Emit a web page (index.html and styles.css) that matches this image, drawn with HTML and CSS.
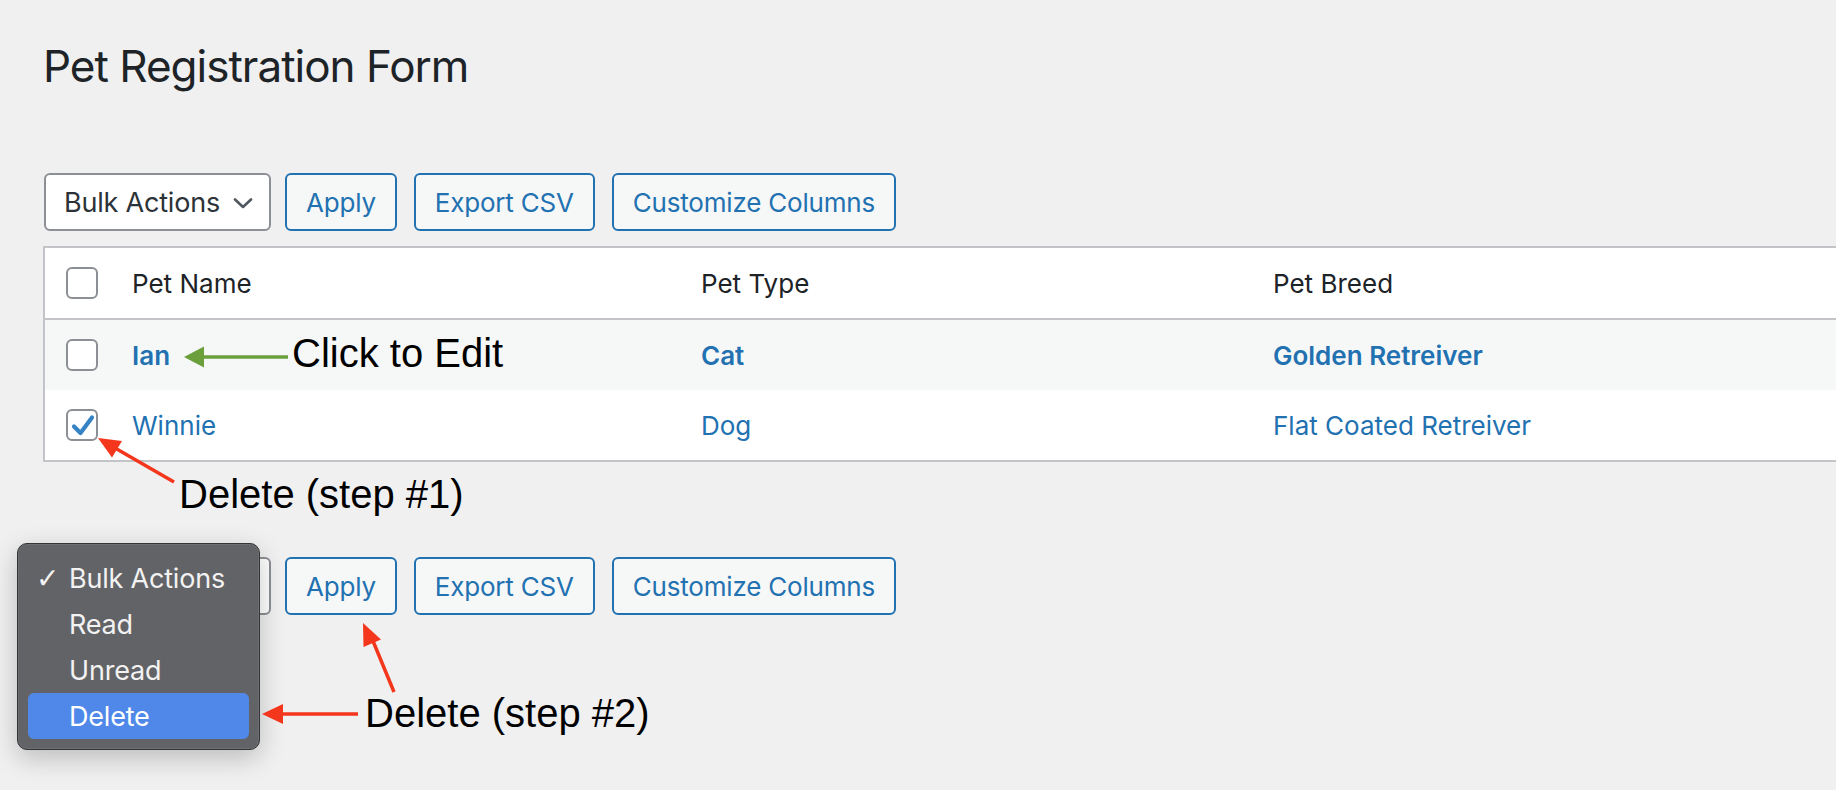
FILE: index.html
```html
<!DOCTYPE html>
<html>
<head>
<meta charset="utf-8">
<title>Pet Registration Form</title>
<link rel="stylesheet" href="styles.css">
</head>
<body>
<div class="page">
  <h1 class="title">Pet Registration Form</h1>

  <div class="toolbar">
    <div class="select">
      <span>Bulk Actions</span>
      <svg class="chev" viewBox="0 0 20 11" width="20" height="11"><path d="M2 1.5 L10 9 L18 1.5" fill="none" stroke="#50575e" stroke-width="2.6" stroke-linecap="round" stroke-linejoin="round"/></svg>
    </div>
    <button class="btn">Apply</button>
    <button class="btn">Export CSV</button>
    <button class="btn">Customize Columns</button>
  </div>

  <div class="table">
    <div class="row head">
      <div class="cell cb"><span class="check"></span></div>
      <div class="cell">Pet Name</div>
      <div class="cell">Pet Type</div>
      <div class="cell">Pet Breed</div>
    </div>
    <div class="row alt strong">
      <div class="cell cb"><span class="check"></span></div>
      <div class="cell link">Ian</div>
      <div class="cell link">Cat</div>
      <div class="cell link">Golden Retreiver</div>
    </div>
    <div class="row">
      <div class="cell cb"><span class="check on"><svg viewBox="0 0 28 28" width="28" height="28"><path d="M6 15.5 L12.5 22 L24 6.5" fill="none" stroke="#3582c4" stroke-width="4.2" stroke-linecap="round" stroke-linejoin="round"/></svg></span></div>
      <div class="cell link">Winnie</div>
      <div class="cell link">Dog</div>
      <div class="cell link">Flat Coated Retreiver</div>
    </div>
  </div>

  <div class="toolbar bottom">
    <div class="select covered"></div>
    <button class="btn">Apply</button>
    <button class="btn">Export CSV</button>
    <button class="btn">Customize Columns</button>
  </div>
</div>

<div class="menu">
  <div class="item"><span class="tick">✓</span>Bulk Actions</div>
  <div class="item">Read</div>
  <div class="item">Unread</div>
  <div class="item active">Delete</div>
</div>

<svg class="arrows" viewBox="0 0 1836 790" width="1836" height="790">
  <g>
    <line x1="288" y1="357" x2="200" y2="357" stroke="#6a9f3c" stroke-width="3.5"/>
    <polygon points="184,357 204,346.5 204,367.5" fill="#6a9f3c"/>
  </g>
  <g fill="#f4361c" stroke="#f4361c">
    <line x1="174" y1="482" x2="115" y2="448" stroke-width="3.5"/>
    <polygon points="98,438 122,441 112,457.5" stroke="none"/>
    <line x1="394" y1="692" x2="373" y2="641" stroke-width="3.5"/>
    <polygon points="363,623 381,639.5 363.5,647" stroke="none"/>
    <line x1="358" y1="714" x2="279" y2="714" stroke-width="3.5"/>
    <polygon points="262,714 283,704 283,724" stroke="none"/>
  </g>
</svg>

<div class="note n-edit">Click to Edit</div>
<div class="note n-step1">Delete (step #1)</div>
<div class="note n-step2">Delete (step #2)</div>
</body>
</html>
```

FILE: styles.css
```css
* { box-sizing: border-box; }

html, body {
  margin: 0;
  padding: 0;
}

body {
  width: 1836px;
  height: 790px;
  overflow: hidden;
  background: #f0f0f1;
  font-family: Inter, "Noto Sans", sans-serif;
  color: #1d2327;
  position: relative;
}

.page {
  padding: 39px 0 0 43px;
}

.title {
  margin: 0;
  font-size: 44px;
  line-height: 54px;
  font-weight: 400;
  color: #1d2327;
  letter-spacing: -1px;
}

.toolbar {
  display: flex;
  align-items: stretch;
  gap: 17px;
  height: 58px;
  margin: 80px 0 15px 1px;
}

.toolbar.bottom {
  margin-top: 95px;
}

.select {
  width: 227px;
  margin-right: -3px;
  display: flex;
  align-items: center;
  justify-content: space-between;
  padding: 0 16px 0 18px;
  background: #fff;
  border: 2px solid #8c8f94;
  border-radius: 6px;
  font-size: 27px;
  color: #2c3338;
  letter-spacing: -0.2px;
}

.chev {
  display: block;
  margin-top: 2px;
}

.btn {
  font-family: inherit;
  font-size: 26px;
  letter-spacing: -0.2px;
  color: #2271b1;
  background: #f6f7f7;
  border: 2px solid #2271b1;
  border-radius: 6px;
  padding: 0 19px;
  margin: 0;
}

.table {
  width: 1840px;
  border-top: 2px solid #c3c4c7;
  border-left: 2px solid #c3c4c7;
  border-bottom: 2px solid #c3c4c7;
  background: #fff;
}

.row {
  display: grid;
  grid-template-columns: 87px 569px 572px 1fr;
  align-items: center;
  height: 70px;
  font-size: 26px;
}

.row.head {
  border-bottom: 2px solid #c3c4c7;
  height: 72px;
  color: #1d2327;
}

.row.alt {
  background: #f6f7f7;
}

.row.strong {
  font-weight: 600;
}

.cell.cb {
  padding-left: 21px;
  display: flex;
  align-items: center;
}

.cell.link {
  color: #2271b1;
}

.check {
  width: 32px;
  height: 32px;
  border: 2px solid #8c8f94;
  border-radius: 6px;
  background: #fff;
  display: flex;
  align-items: center;
  justify-content: center;
}

.check svg {
  display: block;
}

.menu {
  position: absolute;
  left: 17px;
  top: 543px;
  width: 243px;
  padding: 11px 10px 10px;
  background: #626366;
  border: 1px solid #333436;
  border-radius: 10px;
  box-shadow: 0 0 0 1px rgba(255,255,255,0.08) inset, 0 8px 26px rgba(0,0,0,0.22);
  color: #f2f2f2;
  font-size: 27px;
  letter-spacing: -0.2px;
}

.item {
  height: 46px;
  display: flex;
  align-items: center;
  padding-left: 41px;
  position: relative;
  border-radius: 6px;
}

.item.active {
  background: #4f88e8;
  color: #fff;
}

.tick {
  position: absolute;
  left: 8px;
  font-family: "DejaVu Sans", sans-serif;
  font-size: 28px;
  font-weight: bold;
}

.arrows {
  position: absolute;
  left: 0;
  top: 0;
  pointer-events: none;
}

.note {
  position: absolute;
  font-family: "Liberation Sans", Arial, sans-serif;
  font-size: 40px;
  line-height: 40px;
  color: #000;
  white-space: nowrap;
}

.n-edit { left: 292px; top: 333px; }
.n-step1 { left: 179px; top: 474px; }
.n-step2 { left: 365px; top: 693px; }
```
